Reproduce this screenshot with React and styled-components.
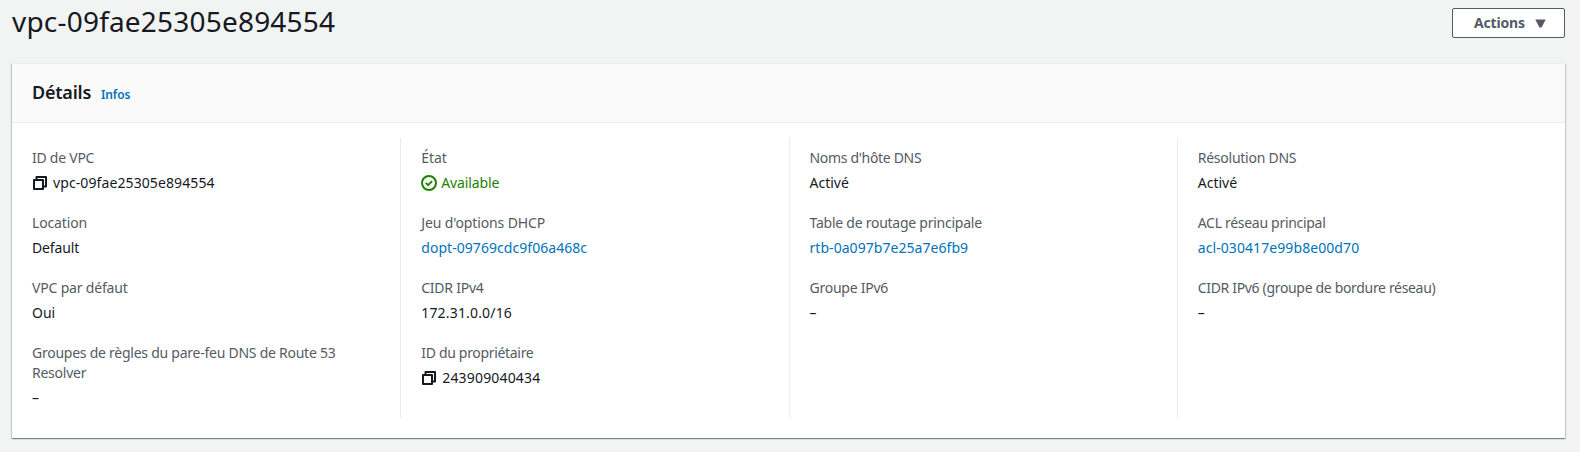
import React from "react";
import styled, { createGlobalStyle } from "styled-components";

const GlobalStyle = createGlobalStyle`
  *, *::before, *::after { box-sizing: border-box; }
  body {
    margin: 0;
    background: #f2f3f3;
    color: #16191f;
    font: 14px/20px "Amazon Ember", "Noto Sans", "Open Sans", sans-serif;
  }
`;

const Page = styled.main`
  height: 452px;
  padding: 0 15px 0 12px;
  overflow: hidden;
`;

const PageHeader = styled.header`
  display: flex;
  justify-content: space-between;
  align-items: flex-start;
  height: 63px;
`;

const Title = styled.h1`
  margin: 3px 0 0;
  font-size: 28px;
  font-weight: 400;
  line-height: 36px;
  letter-spacing: 0.2px;
`;

const ActionsButton = styled.button`
  display: flex;
  align-items: center;
  justify-content: space-between;
  width: 113px;
  height: 30px;
  margin-top: 8px;
  padding: 0 18px 0 21px;
  border: 1px solid #545b64;
  border-radius: 2px;
  background: #fff;
  color: #545b64;
  font: 700 14px/20px "Amazon Ember", "Noto Sans", sans-serif;
  letter-spacing: -0.18px;
`;

const Panel = styled.section`
  height: 375px;
  background: #fff;
  border-top: 1px solid #eaeded;
  box-shadow: 0 1px 1px 0 rgba(0, 28, 36, 0.3), 1px 1px 1px 0 rgba(0, 28, 36, 0.15),
    -1px 1px 1px 0 rgba(0, 28, 36, 0.15);
`;

const PanelHeader = styled.div`
  display: flex;
  align-items: baseline;
  gap: 10px;
  height: 59px;
  padding: 17px 20px 0;
  background: #fafafa;
  border-bottom: 1px solid #eaeded;
`;

const PanelTitle = styled.h2`
  margin: 0;
  font-size: 18px;
  font-weight: 600;
  line-height: 22px;
  letter-spacing: -0.22px;
`;

const InfoLink = styled.a`
  color: #0073bb;
  font-size: 12px;
  font-weight: 600;
  letter-spacing: -0.15px;
`;

const Columns = styled.div`
  display: grid;
  grid-template-columns: repeat(4, 1fr);
  padding: 15px 0 20px;
`;

const Column = styled.div`
  display: flex;
  flex-direction: column;
  gap: 20px;
  padding: 10px 20px;
  border-left: 1px solid #eaeded;

  &:first-child {
    border-left-color: transparent;
    padding-left: 19px;
  }
`;

const Field = styled.div`
  display: flex;
  flex-direction: column;
  gap: 5px;
`;

const Label = styled.div`
  color: #545b64;
  letter-spacing: ${(p) => p.$tracking ?? -0.25}px;
`;

const colors = { text: "#16191f", link: "#0073bb", success: "#1d8102" };

const Value = styled.div`
  display: flex;
  align-items: center;
  gap: ${(p) => (p.$tone === "success" ? 4 : 6)}px;
  color: ${(p) => colors[p.$tone || "text"]};
  letter-spacing: ${(p) => p.$tracking || 0}px;
`;

const Icon = styled.svg`
  flex: none;
  display: block;
`;

const CopyIcon = () => (
  <Icon width="15" height="16" viewBox="0 0 15 16" fill="none" stroke="#16191f" strokeWidth="2" strokeLinejoin="round">
    <path d="M2 5h9v9H2z" />
    <path d="M4.5 5V2H14v9.5h-3" />
  </Icon>
);

const CheckIcon = () => (
  <Icon width="16" height="16" viewBox="0 0 16 16" fill="none" stroke="#1d8102" strokeWidth="2">
    <circle cx="8" cy="8" r="7" />
    <path d="M4.9 7.9l2.2 2.2 4-4" />
  </Icon>
);

const Caret = () => (
  <Icon width="11" height="9" viewBox="0 0 11 9" fill="#545b64">
    <path d="M.3.5h10.4L6.6 8.5H4.4z" />
  </Icon>
);

const icons = { copy: CopyIcon, check: CheckIcon };

const columns = [
  [
    { label: "ID de VPC", value: "vpc-09fae25305e894554", icon: "copy", tracking: 0.1 },
    { label: "Location", value: "Default", labelTracking: -0.15, tracking: -0.15 },
    { label: "VPC par défaut", value: "Oui", labelTracking: -0.18 },
    { label: "Groupes de règles du pare-feu DNS de Route 53 Resolver", value: "–" },
  ],
  [
    { label: "État", value: "Available", icon: "check", tone: "success", labelTracking: -0.1, tracking: -0.12 },
    { label: "Jeu d'options DHCP", value: "dopt-09769cdc9f06a468c", tone: "link", labelTracking: -0.12, tracking: 0.05 },
    { label: "CIDR IPv4", value: "172.31.0.0/16", tracking: 0.17 },
    { label: "ID du propriétaire", value: "243909040434", icon: "copy", labelTracking: -0.32, tracking: 0.17 },
  ],
  [
    { label: "Noms d'hôte DNS", value: "Activé", labelTracking: -0.32 },
    { label: "Table de routage principale", value: "rtb-0a097b7e25a7e6fb9", tone: "link", tracking: 0.05 },
    { label: "Groupe IPv6", value: "–" },
  ],
  [
    { label: "Résolution DNS", value: "Activé" },
    { label: "ACL réseau principal", value: "acl-030417e99b8e00d70", tone: "link", labelTracking: -0.3, tracking: 0.08 },
    { label: "CIDR IPv6 (groupe de bordure réseau)", value: "–", labelTracking: -0.33 },
  ],
];

function Detail({ label, value, icon, tone, labelTracking, tracking }) {
  const Glyph = icons[icon];
  return (
    <Field>
      <Label $tracking={labelTracking}>{label}</Label>
      <Value $tone={tone} $tracking={tracking}>
        {Glyph && <Glyph />}
        <span>{value}</span>
      </Value>
    </Field>
  );
}

export default function App() {
  return (
    <>
      <GlobalStyle />
      <Page>
        <PageHeader>
          <Title>vpc-09fae25305e894554</Title>
          <ActionsButton>
            Actions
            <Caret />
          </ActionsButton>
        </PageHeader>
        <Panel>
          <PanelHeader>
            <PanelTitle>Détails</PanelTitle>
            <InfoLink>Infos</InfoLink>
          </PanelHeader>
          <Columns>
            {columns.map((fields, i) => (
              <Column key={i}>
                {fields.map((field) => (
                  <Detail key={field.label} {...field} />
                ))}
              </Column>
            ))}
          </Columns>
        </Panel>
      </Page>
    </>
  );
}
